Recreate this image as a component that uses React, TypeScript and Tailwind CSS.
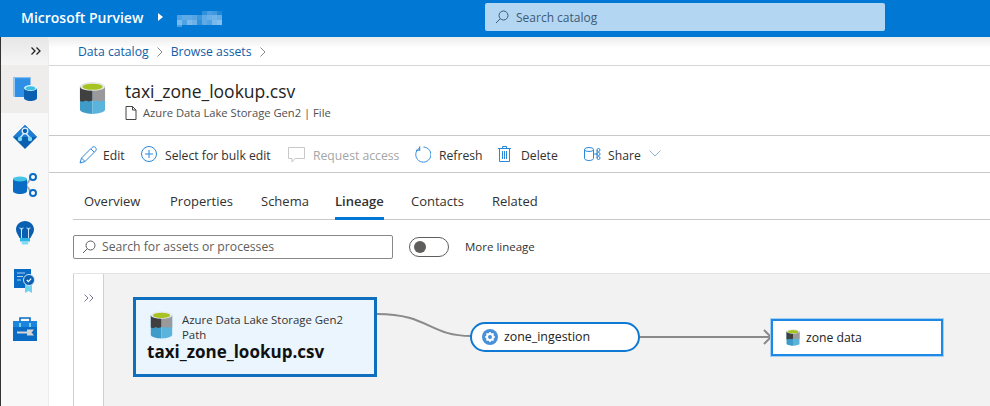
import React from "react";

const font = { fontFamily: '"Open Sans", "Liberation Sans", sans-serif' };

// pixelated tenant name in the header
const mosaic = [
  ["", "", "", "", "", "bg-[#2f91dc]", "bg-[#4a9fe2]", "bg-[#3f99e0]", "bg-[#1f86d8]"],
  ["bg-[#4fa2e3]", "bg-[#5eaae6]", "bg-[#5eaae6]", "bg-[#55a5e4]", "bg-[#3a96de]", "bg-[#5eaae6]", "bg-[#69b0e8]", "bg-[#6fb4e9]", "bg-[#63ade7]"],
  ["bg-[#7ab9eb]", "bg-[#4fa2e3]", "bg-[#7ab9eb]", "bg-[#6cb2e8]", "bg-[#2f91dc]", "bg-[#5eaae6]", "bg-[#4fa2e3]", "bg-[#7ab9eb]", "bg-[#84bfed]"],
  ["bg-[#4a9fe2]", "", "", "", "", "", "", "", ""],
];

function Cylinder({ className }: { className?: string }) {
  return (
    <svg viewBox="0 0 28 34" className={className}>
      <path d="M1 5v24c0 2.500 6 4.500 13 4.500V5z" fill="#3f9cc9" />
      <path d="M27 5v24c0 2.500-6 4.500-13 4.500V5z" fill="#5ab4dc" />
      <path d="M1 5v15l3 1 3-1.500 3 1 4-1V5z" fill="#404040" />
      <path d="M27 5v15l-3-.5-3 1-3-1-4 .5V5z" fill="#9a9a9a" />
      <ellipse cx="14" cy="5" rx="13" ry="4.500" fill="#e8e8e8" />
      <ellipse cx="14" cy="5.300" rx="10.500" ry="3.200" fill="#a5c422" />
    </svg>
  );
}

function CatalogIcon() {
  return (
    <svg viewBox="0 0 24 24" className="w-6 h-6">
      <rect x="0.500" y="0" width="17" height="20" rx="1" fill="#2f8fe6" />
      <rect x="0.500" y="0" width="1.500" height="20" fill="#9ccbf3" />
      <rect x="0.500" y="0" width="17" height="1.200" fill="#7fbcf0" />
      <path d="M11 11v10c0 1.600 3 3 6.500 3s6.500-1.400 6.500-3V11z" fill="#0a5fb0" />
      <ellipse cx="17.500" cy="11" rx="6.500" ry="3" fill="#e6f4fb" />
      <ellipse cx="17.500" cy="11.200" rx="4.800" ry="2" fill="#38bfe6" />
    </svg>
  );
}

function DiamondIcon() {
  return (
    <svg viewBox="0 0 24 24" className="w-6 h-6">
      <path d="M12 0 24 12 12 24 0 12z" fill="#0a5fb0" />
      <path d="M12 0 24 12 0 12z" fill="#1c7ed6" />
      <path d="M12 7 7 13M12 7l5 6" stroke="#d8eafa" strokeWidth="1.300" />
      <circle cx="12" cy="6" r="2.800" fill="#0a5fb0" stroke="#e4f1fb" strokeWidth="1.300" />
      <circle cx="7" cy="14" r="2.200" fill="#7fdcf2" />
      <circle cx="17" cy="14" r="2.200" fill="#7fdcf2" />
    </svg>
  );
}

function ShareDbIcon() {
  return (
    <svg viewBox="0 0 24 24" className="w-6 h-6">
      <path d="M18 5 13 12l5 7" stroke="#a8a8a8" strokeWidth="2" fill="none" />
      <path d="M0 6v12c0 1.600 3 3 7 3s7-1.400 7-3V6z" fill="#0a6bc4" />
      <ellipse cx="7" cy="6" rx="7" ry="2.600" fill="#45c4e8" />
      <circle cx="20" cy="4" r="3" fill="#fff" stroke="#0a6bc4" strokeWidth="2" />
      <circle cx="20" cy="20" r="3" fill="#fff" stroke="#0a6bc4" strokeWidth="2" />
    </svg>
  );
}

function BulbIcon() {
  return (
    <svg viewBox="0 0 18 24" className="w-[18px] h-6">
      <path d="M9 0c5 0 9 3.700 9 8.500 0 3.500-2.500 5.500-3.500 8.500H3.500C2.500 14 0 12 0 8.500 0 3.700 4 0 9 0z" fill="#0a5fb0" />
      <path d="M5.500 7v10M12.500 7v10M4 6.500c0 2.500 3 2.500 3 0M11 6.500c0 2.500 3 2.500 3 0" stroke="#cfe6f8" strokeWidth="1" fill="none" />
      <rect x="4" y="17" width="10" height="3.500" fill="#2fb5e6" />
      <rect x="5.500" y="20.500" width="7" height="3" rx="1.500" fill="#7fdcf2" />
    </svg>
  );
}

function CertificateIcon() {
  return (
    <svg viewBox="0 0 21 24" className="w-[21px] h-6">
      <rect x="0" y="0" width="17" height="19" fill="#0a6bc4" />
      <path d="M3 4h8M3 7.500h6M3 11h4" stroke="#a9d3f5" strokeWidth="1" />
      <path d="M11 15h7v9l-3.500-2-3.500 2z" fill="#6fd3ee" />
      <circle cx="15" cy="11" r="5.500" fill="#0a5fb0" stroke="#cfe6f8" strokeWidth="1" />
      <path d="m12.800 11 1.600 1.600 2.800-3" stroke="#fff" strokeWidth="1.200" fill="none" />
    </svg>
  );
}

function ToolboxIcon() {
  return (
    <svg viewBox="0 0 24 24" className="w-6 h-6">
      <path d="M7 4V1h10v3" stroke="#0a6bc4" strokeWidth="1.600" fill="none" />
      <rect x="0" y="4" width="24" height="20" fill="#0a6bc4" />
      <rect x="0" y="4" width="24" height="6" fill="#1c84dc" />
      <rect x="6" y="6" width="2" height="4" fill="#6fd3ee" />
      <rect x="16" y="6" width="2" height="4" fill="#6fd3ee" />
      <path d="M4 15.500h11M15 13.500h4l-1.500 2 1.500 2h-4z" stroke="#d4d4d4" strokeWidth="2" fill="#d4d4d4" />
    </svg>
  );
}

function Search({ color }: { color: string }) {
  return (
    <svg viewBox="0 0 14 14" className="w-[14px] h-[14px]" fill="none" stroke={color} strokeWidth="1">
      <circle cx="8.500" cy="5.500" r="4.500" />
      <path d="M5.300 8.700 1 13" />
    </svg>
  );
}

function Crumb() {
  return (
    <svg viewBox="0 0 6 10" className="w-[6px] h-[10px]" fill="none" stroke="#8a8a8a" strokeWidth="1">
      <path d="M.5 .5 5 5 .5 9.500" />
    </svg>
  );
}

function NavSlot({ active, children }: { active?: boolean; children: React.ReactNode }) {
  return (
    <div className={`h-12 flex items-center justify-center ${active ? "bg-[#eeedec]" : ""}`}>{children}</div>
  );
}

const tabs = [
  { label: "Overview", w: "w-[86px]" },
  { label: "Properties", w: "w-[91px]" },
  { label: "Schema", w: "w-[74px]" },
  { label: "Lineage", w: "w-[76px]", active: true },
  { label: "Contacts", w: "w-[81px]" },
  { label: "Related", w: "w-[70px]" },
];

export default function App() {
  return (
    <div className="w-[990px] h-[406px] overflow-hidden flex flex-col bg-white text-[#323130]" style={font}>
      {/* Top bar */}
      <header className="h-[37px] shrink-0 bg-[#0078d4] flex items-center text-white">
        <div className="ml-[21px] w-[137px] text-[14px] font-semibold whitespace-nowrap -mt-[2px]">Microsoft Purview</div>
        <div className="w-0 h-0 border-y-[4px] border-y-transparent border-l-[5px] border-l-white -mt-[3px]"></div>
        <div className="ml-[14px] flex flex-col mt-[1px]">
          {mosaic.map((row, i) => (
            <div key={i} className={`flex ${i === 3 ? "h-[2px]" : i === 0 ? "h-[4px]" : "h-[5px]"}`}>
              {row.map((cell, j) => (
                <div key={j} className={`w-[5px] ${cell}`}></div>
              ))}
            </div>
          ))}
        </div>
        <div className="ml-[263px] w-[400px] h-[28px] -mt-[3px] rounded-[2px] bg-[#b3d6f2] flex items-center pl-[10px] gap-[7px] text-[12px] text-[#3d5a75]">
          <Search color="#3d5a75" />
          <span className="mt-[1px]">Search catalog</span>
        </div>
      </header>

      <div className="flex-1 flex min-h-0">
        {/* Left rail */}
        <aside className="w-[49px] shrink-0 bg-[#f8f8f8] border-l border-l-[#333] border-r border-r-[#ececec] flex flex-col">
          <div className="h-[28px] bg-gradient-to-b from-[#e6e6e6] to-[#f6f6f6] flex items-center justify-end pr-[7px]">
            <svg viewBox="0 0 10 8" className="w-[10px] h-2" fill="none" stroke="#222" strokeWidth="1.300">
              <path d="M.5 .5 4 4 .5 7.500M5.500 .5 9 4 5.500 7.500" />
            </svg>
          </div>
          <NavSlot active><CatalogIcon /></NavSlot>
          <NavSlot><DiamondIcon /></NavSlot>
          <NavSlot><ShareDbIcon /></NavSlot>
          <NavSlot><BulbIcon /></NavSlot>
          <NavSlot><CertificateIcon /></NavSlot>
          <NavSlot><ToolboxIcon /></NavSlot>
        </aside>

        <main className="flex-1 min-w-0 flex flex-col">
          {/* Breadcrumb */}
          <div className="h-[29px] shrink-0 border-b border-[#d6d6d6] bg-gradient-to-b from-[#ececec] to-white to-[40%] pl-[29px] flex items-center text-[12.2px] text-[#0f5ea8] pt-[2px]">
            <span>Data catalog</span>
            <span className="ml-[8px] mr-[8px]"><Crumb /></span>
            <span>Browse assets</span>
            <span className="ml-[8px]"><Crumb /></span>
          </div>

          {/* Asset title */}
          <div className="h-[70px] shrink-0 border-b border-[#c8c8c8] flex items-start pl-[30px] pt-[15px]">
            <Cylinder className="w-[27px] h-[34px]" />
            <div className="ml-[19px]">
              <div className="text-[17.5px] leading-[20px] font-medium text-[#252423]">taxi_zone_lookup.csv</div>
              <div className="flex items-center mt-[4px] text-[11.2px] text-[#505050]">
                <svg viewBox="0 0 12 14" className="w-[12px] h-[14px] mr-[6px]" fill="none" stroke="#444" strokeWidth="1">
                  <path d="M1 .5h6.500L11 4v9.500H1zM7.500 .5V4H11" />
                </svg>
                Azure Data Lake Storage Gen2 | File
              </div>
            </div>
          </div>

          {/* Toolbar */}
          <div className="h-[37px] shrink-0 border-b border-[#c8c8c8] flex items-center pl-[30px] pt-[4px] text-[12.2px] text-[#323130]">
            <svg viewBox="0 0 18 18" className="w-[18px] h-[18px] -mt-[2px]" fill="none" stroke="#2b88d8" strokeWidth="1">
              <path d="M1 17l1.500-5L13 1.500c1-1 2.500-1 3.500 0s1 2.500 0 3.500L6 15.500zM2.500 12 6 15.500M12 3l3 3" />
            </svg>
            <span className="ml-[6px] w-[38px]">Edit</span>
            <svg viewBox="0 0 16 16" className="w-4 h-4 -mt-[5px]" fill="none" stroke="#2b88d8" strokeWidth="1">
              <circle cx="8" cy="8" r="7.500" />
              <path d="M8 4v8M4 8h8" />
            </svg>
            <span className="ml-[8px] w-[123px] whitespace-nowrap">Select for bulk edit</span>
            <svg viewBox="0 0 18 16" className="w-[18px] h-4 -mt-[2px]" fill="none" stroke="#c8c8c8" strokeWidth="1">
              <path d="M.5 .5h16v11H7l-3 3.500v-3.500H.5z" />
            </svg>
            <span className="ml-[7px] w-[101px] whitespace-nowrap text-[#a6a6a6]">Request access</span>
            <svg viewBox="0 0 18 18" className="w-[17px] h-[17px] -mt-[4px]" fill="none" stroke="#2b88d8" strokeWidth="1">
              <path d="M5.500 2.400A8 8 0 1 0 10 1.100" />
              <path d="M6 .5v4h-4" strokeWidth="1.200" />
            </svg>
            <span className="ml-[8px] w-[59px]">Refresh</span>
            <svg viewBox="0 0 13 16" className="w-[13px] h-4 -mt-[4px]" fill="none" stroke="#2b88d8" strokeWidth="1">
              <path d="M0 2.500h13M4.500 2.500V.5h4v2M1.500 2.500v13h10v-13M4.500 5v8M6.500 5v8M8.500 5v8" />
            </svg>
            <span className="ml-[10px] w-[63px]">Delete</span>
            <svg viewBox="0 0 17 14" className="w-[17px] h-[14px] -mt-[4px]" fill="none" stroke="#2b88d8" strokeWidth="1">
              <path d="M.5 2.500v9c0 1 2 2 4.500 2s4.500-1 4.500-2v-9" />
              <ellipse cx="5" cy="2.500" rx="4.500" ry="2" />
              <path d="M9.500 7H13M13 3v8" />
              <circle cx="14.500" cy="3" r="1.500" />
              <circle cx="14.500" cy="7" r="1.500" />
              <circle cx="14.500" cy="11" r="1.500" />
            </svg>
            <span className="ml-[7px] w-[41px]">Share</span>
            <svg viewBox="0 0 12 7" className="w-[12px] h-[7px] -mt-[5px]" fill="none" stroke="#8fb8dc" strokeWidth="1">
              <path d="M.5 .5 6 6l5.500-5.500" />
            </svg>
          </div>

          {/* Tabs */}
          <div className="h-[47px] shrink-0 ml-[24px] border-b border-[#c8c8c8] flex items-end text-[13px] pl-[11px]">
            {tabs.map((tab) => (
              <div key={tab.label} className={tab.w}>
                <div className={`inline-block ${tab.active ? "font-semibold border-b-[3px] border-[#0078d4] -mb-[1px] pb-[6px]" : "pb-[8px]"}`}>
                  {tab.label}
                </div>
              </div>
            ))}
          </div>

          {/* Search and toggle */}
          <div className="h-[53px] shrink-0 pl-[24px] flex items-center text-[12.2px]">
            <div className="w-[320px] h-[24px] border border-[#8a8886] rounded-[2px] flex items-center pl-[8px] gap-[6px] text-[#605e5c]">
              <Search color="#605e5c" />
              <span className="mt-[2px]">Search for assets or processes</span>
            </div>
            <div className="ml-[16px] w-[40px] h-[20px] rounded-full border border-[#605e5c] flex items-center pl-[4px]">
              <div className="w-[12px] h-[12px] rounded-full bg-[#605e5c]"></div>
            </div>
            <span className="ml-[16px] mt-[1px] text-[11.5px]">More lineage</span>
          </div>

          {/* Lineage canvas */}
          <div className="flex-1 ml-[24px] bg-[#f2f2f2] border-t border-[#e4e4e4] flex min-h-0">
            <div className="w-[31px] bg-white border-x border-[#d0d0d0] flex justify-center pt-[20px]">
              <svg viewBox="0 0 10 8" className="w-[10px] h-2" fill="none" stroke="#7a7a9a" strokeWidth="1">
                <path d="M.5 .5 4 4 .5 7.500M5.500 .5 9 4 5.500 7.500" />
              </svg>
            </div>
            <div className="relative flex-1">
              <svg className="absolute left-0 top-0 w-full h-full" fill="none" stroke="#8a8a8a" strokeWidth="2">
                <path d="M273 40C325 40 325 62 367 62" />
                <path d="M535 63H666" />
                <path d="M660 56l7 7-7 7" />
              </svg>
              <div className="absolute left-[29px] top-[23px] w-[244px] h-[80px] bg-[#eaf5fe] border-[3px] border-[#106ebe] pl-[11px] pt-[11px]">
                <div className="flex items-start pl-[3px]">
                  <Cylinder className="w-[23px] h-[28px]" />
                  <div className="ml-[9px] mt-[1px] text-[11.4px] leading-[15px] text-[#333]">
                    Azure Data Lake Storage Gen2
                    <br />
                    Path
                  </div>
                </div>
                <div className="text-[17px] leading-[16px] font-bold text-[#111] mt-[2px]">taxi_zone_lookup.csv</div>
              </div>
              <div className="absolute left-[366px] top-[48px] w-[170px] h-[30px] bg-white border-2 border-[#0f78d2] rounded-full flex items-center pl-[10px] text-[12.4px] text-[#222]">
                <svg viewBox="0 0 16 16" className="w-4 h-4 mr-[6px]">
                  <circle cx="8" cy="8" r="8" fill="#4a90d9" />
                  <circle cx="8" cy="8" r="3" fill="none" stroke="#fff" strokeWidth="2" />
                  <path d="M8 3v2M8 11v2M3 8h2M11 8h2M4.500 4.500l1.400 1.400M10.100 10.100l1.400 1.400M4.500 11.500l1.400-1.400M10.100 5.900l1.400-1.400" stroke="#fff" strokeWidth="1.600" />
                </svg>
                <span className="mt-[1px]">zone_ingestion</span>
              </div>
              <div className="absolute left-[667px] top-[45px] w-[172px] h-[37px] bg-white border-2 border-[#1e88e5] outline outline-1 outline-[#a6d0f2] flex items-center pl-[13px] text-[12.2px] text-[#222]">
                <Cylinder className="w-[14px] h-[17px]" />
                <span className="ml-[6px] mt-[1px]">zone data</span>
              </div>
            </div>
          </div>
        </main>
      </div>
    </div>
  );
}
